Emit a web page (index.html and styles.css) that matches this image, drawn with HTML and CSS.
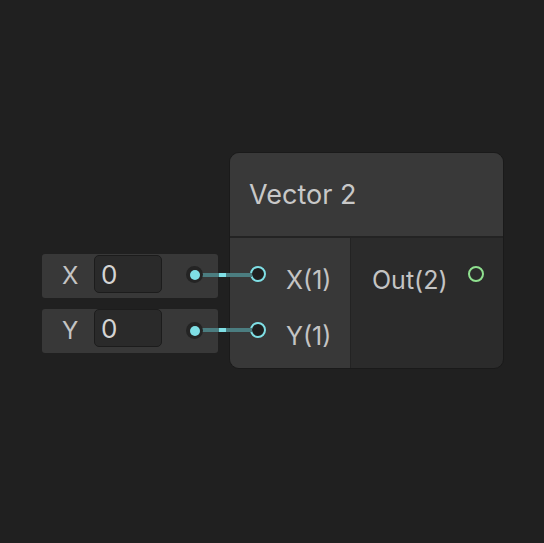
FILE: index.html
```html
<!DOCTYPE html>
<html>
<head>
<meta charset="utf-8">
<link rel="stylesheet" href="styles.css">
</head>
<body>
<div class="canvas">
  <div class="prop prop-x">
    <span class="prop-label">X</span>
    <span class="prop-input">0</span>
    <span class="prop-dot"></span>
  </div>
  <div class="prop prop-y">
    <span class="prop-label">Y</span>
    <span class="prop-input">0</span>
    <span class="prop-dot"></span>
  </div>

  <svg class="edges" width="544" height="543" viewBox="0 0 544 543">
    <line x1="200" y1="275" x2="252" y2="275" stroke="#4b7d80" stroke-width="4"/>
    <line x1="219" y1="275" x2="226" y2="275" stroke="#7fdfe5" stroke-width="4"/>
    <line x1="200" y1="330" x2="252" y2="330" stroke="#4b7d80" stroke-width="4"/>
    <line x1="219" y1="330" x2="226" y2="330" stroke="#7fdfe5" stroke-width="4"/>
  </svg>

  <div class="node">
    <div class="node-title">Vector 2</div>
    <div class="node-body">
      <div class="inputs">
        <div class="port-row">
          <span class="port port-in"></span>
          <span class="port-label">X(1)</span>
        </div>
        <div class="port-row">
          <span class="port port-in"></span>
          <span class="port-label">Y(1)</span>
        </div>
      </div>
      <div class="outputs">
        <div class="port-row out-row">
          <span class="port-label">Out(2)</span>
          <span class="port port-out"></span>
        </div>
      </div>
    </div>
  </div>
</div>
</body>
</html>
```

FILE: styles.css
```css
html, body {
  margin: 0;
  padding: 0;
  background: #202020;
}
body {
  font-family: Inter, "Noto Sans", sans-serif;
  color: #c4c4c4;
}
.canvas {
  position: relative;
  width: 544px;
  height: 543px;
  overflow: hidden;
  background: #202020;
}
.edges {
  position: absolute;
  left: 0;
  top: 0;
  z-index: 1;
}

/* property fields */
.prop {
  position: absolute;
  left: 42px;
  width: 176px;
  height: 44px;
  background: #383838;
  border-radius: 3px;
  display: flex;
  align-items: flex-start;
  box-sizing: border-box;
}
.prop-x { top: 254px; }
.prop-y { top: 309px; }
.prop-label {
  width: 52px;
  padding-left: 20px;
  box-sizing: border-box;
  font-size: 24px;
  line-height: 44px;
  color: #c4c4c4;
}
.prop-input {
  width: 68px;
  height: 38px;
  box-sizing: border-box;
  margin-top: 1px;
  background: #2a2a2a;
  border: 1px solid #1c1c1c;
  border-radius: 5px;
  font-size: 26px;
  line-height: 38px;
  color: #d4d4d4;
  padding-left: 6px;
  padding-top: 0;
}
.prop-y .prop-input { margin-top: 0; }
.prop-dot {
  margin-left: 24px;
  margin-top: 12px;
  width: 17px;
  height: 17px;
  border-radius: 50%;
  background: #242424;
  display: flex;
  align-items: center;
  justify-content: center;
  position: relative;
  z-index: 2;
}
.prop-y .prop-dot { margin-top: 13px; }
.prop-dot::after {
  content: "";
  width: 10px;
  height: 10px;
  border-radius: 50%;
  background: #7fdfe5;
}

/* node */
.node {
  position: absolute;
  left: 229px;
  top: 152px;
  width: 275px;
  height: 217px;
  box-sizing: border-box;
  border: 1px solid #1a1a1a;
  border-radius: 10px;
  overflow: hidden;
  background: #2b2b2b;
  display: flex;
  flex-direction: column;
  z-index: 0;
}
.node-title {
  height: 85px;
  flex: none;
  background: #393939;
  border-bottom: 2px solid #232323;
  box-sizing: border-box;
  padding-left: 19px;
  display: flex;
  align-items: center;
  font-size: 27px;
  color: #c8c8c8;
  padding-top: 0;
}
.node-body {
  flex: 1;
  display: flex;
}
.inputs {
  width: 120px;
  background: #383838;
  border-right: 1px solid #232323;
  padding-top: 8px;
}
.outputs {
  flex: 1;
  padding-top: 8px;
}
.port-row {
  height: 56px;
  display: flex;
  align-items: flex-start;
  position: relative;
}
.port {
  width: 16px;
  height: 16px;
  box-sizing: border-box;
  border-radius: 50%;
  flex: none;
  margin-top: 20px;
}
.port-in {
  margin-left: 20px;
  border: 2px solid #7fdfe5;
  background: #1f1f1f;
  position: relative;
  z-index: 3;
}
.port-label {
  font-size: 25px;
  line-height: 30px;
  color: #c4c4c4;
  margin-top: 19px;
}
.inputs .port-label {
  margin-left: 20px;
}
.out-row .port-label {
  margin-left: 21px;
}
.port-out {
  margin-left: auto;
  margin-right: 19px;
  border: 2px solid #8fe08f;
  background: #2b2b2b;
}
```
